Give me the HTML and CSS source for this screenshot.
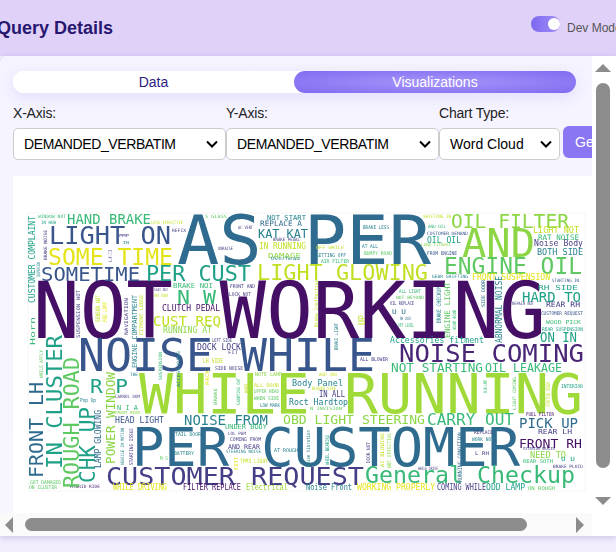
FILE: index.html
```html
<!DOCTYPE html>
<html lang="en">

<head>
    <meta charset="UTF-8">
    <meta name="viewport" content="width=device-width, initial-scale=1.0">
    <title>Query Details</title>
    <link rel="stylesheet" href="styles.css">
</head>

<body>
    <header class="top">
        <h1>Query Details</h1>
        <div class="dev-mode">
            <span class="toggle"><span class="knob"></span></span>
            <span class="dev-label">Dev Mode</span>
        </div>
    </header>

    <main class="card">
        <div class="content">
            <div class="tabs">
                <button class="tab">Data</button>
                <button class="tab active">Visualizations</button>
            </div>

            <div class="controls">
                <div class="field axis">
                    <label for="xAxis">X-Axis:</label>
                    <select id="xAxis"><option>DEMANDED_VERBATIM</option></select>
                </div>
                <div class="field axis">
                    <label for="yAxis">Y-Axis:</label>
                    <select id="yAxis"><option>DEMANDED_VERBATIM</option></select>
                </div>
                <div class="field kind">
                    <label for="chartType">Chart Type:</label>
                    <select id="chartType"><option>Word Cloud</option></select>
                </div>
                <button class="generate">Generate</button>
            </div>

            <div class="panel">
                <!-- word cloud, coordinates are page pixels -->
                <svg class="cloud" width="579" height="337" viewBox="13 176 579 337">
                    <rect class="cloud-bg" x="28" y="213" width="557" height="278"/>

                    <!-- big words -->
                    <text class="v0" x="33" y="338" font-size="78" textLength="513" lengthAdjust="spacingAndGlyphs">NOT WORKING</text>
                    <text class="v3" x="177" y="264" font-size="67" textLength="254" lengthAdjust="spacingAndGlyphs">AS PER</text>
                    <text class="v7" x="139" y="413" font-size="55" textLength="444" lengthAdjust="spacingAndGlyphs">WHILE RUNNING</text>
                    <text class="v3" x="132" y="466" font-size="53" textLength="388" lengthAdjust="spacingAndGlyphs">PER CUSTOMER</text>
                    <text class="v2" x="78" y="371" font-size="45" textLength="297" lengthAdjust="spacingAndGlyphs">NOISE WHILE</text>
                    <text class="v7b" x="462" y="257" font-size="39" textLength="73" lengthAdjust="spacingAndGlyphs">AND</text>
                    <text class="v1" x="106" y="485" font-size="25" textLength="258" lengthAdjust="spacingAndGlyphs">CUSTOMER REQUEST</text>
                    <text class="v0b" x="399" y="362" font-size="25" textLength="185" lengthAdjust="spacingAndGlyphs">NOISE COMING</text>
                    <text class="v2" x="49" y="244" font-size="25" textLength="122" lengthAdjust="spacingAndGlyphs">LIGHT ON</text>
                    <text class="v5" x="365" y="483" font-size="23" textLength="210" lengthAdjust="spacingAndGlyphs">General Checkup</text>
                    <text class="v9" x="48" y="265" font-size="23" textLength="125" lengthAdjust="spacingAndGlyphs">SOME TIME</text>
                    <text class="v6" x="444" y="274" font-size="23" textLength="138" lengthAdjust="spacingAndGlyphs">ENGINE OIL</text>
                    <text class="v8" x="257" y="280" font-size="22" textLength="171" lengthAdjust="spacingAndGlyphs">LIGHT GLOWING</text>
                    <text class="v4" x="146" y="281" font-size="21" textLength="105" lengthAdjust="spacingAndGlyphs">PER CUST</text>
                    <text class="v2" x="41" y="281" font-size="20" textLength="99" lengthAdjust="spacingAndGlyphs">SOMETIME</text>
                    <text class="v7b" x="451" y="228" font-size="19.5" textLength="118" lengthAdjust="spacingAndGlyphs">OIL FILTER</text>
                    <text class="v5" x="177" y="304" font-size="20" textLength="39" lengthAdjust="spacingAndGlyphs">N W</text>
                    <text class="v4" x="90" y="393" font-size="20" textLength="38" lengthAdjust="spacingAndGlyphs">R P</text>

                    <!-- medium words -->
                    <text class="v5" x="67" y="224" font-size="13.6" textLength="84" lengthAdjust="spacingAndGlyphs">HAND BRAKE</text>
                    <text class="v8" x="153" y="326" font-size="13.6" textLength="68" lengthAdjust="spacingAndGlyphs">CUST REQ</text>
                    <text class="v4" x="522" y="302" font-size="13.6" textLength="59" lengthAdjust="spacingAndGlyphs">HARD TO</text>
                    <text class="v4" x="540" y="342" font-size="13.6" textLength="37" lengthAdjust="spacingAndGlyphs">ON IN</text>
                    <text class="v5" x="391" y="372" font-size="12.6" textLength="92" lengthAdjust="spacingAndGlyphs">NOT STARTING</text>
                    <text class="v5" x="485" y="372" font-size="12.6" textLength="77" lengthAdjust="spacingAndGlyphs">OIL LEAKAGE</text>
                    <text class="v5" x="427" y="425" font-size="15.8" textLength="87" lengthAdjust="spacingAndGlyphs">CARRY OUT</text>
                    <text class="v7b" x="283" y="424" font-size="13" textLength="142" lengthAdjust="spacingAndGlyphs">OBD LIGHT STEERING</text>
                    <text class="v3b" x="184" y="425" font-size="13.8" textLength="84" lengthAdjust="spacingAndGlyphs">NOISE FROM</text>
                    <text class="v3" x="519" y="428" font-size="13.6" textLength="59" lengthAdjust="spacingAndGlyphs">PICK UP</text>
                    <text class="v0" x="519" y="448" font-size="13" textLength="63" lengthAdjust="spacingAndGlyphs">FRONT RH</text>
                    <text class="v3b" x="258" y="238" font-size="12" textLength="50" lengthAdjust="spacingAndGlyphs">KAT KAT</text>
                    <text class="v3b" x="537" y="255" font-size="9" textLength="46" lengthAdjust="spacingAndGlyphs">BOTH SIDE</text>
                    <text class="v1" x="534" y="246" font-size="9" textLength="49" lengthAdjust="spacingAndGlyphs">Noise Body</text>
                    <text class="v4" x="427" y="243" font-size="9" textLength="34" lengthAdjust="spacingAndGlyphs">OIL OIL</text>
                    <text class="v8" x="259" y="249" font-size="9" textLength="47" lengthAdjust="spacingAndGlyphs">IN RUNNING</text>
                    <text class="v3b" x="292" y="386" font-size="9" textLength="51" lengthAdjust="spacingAndGlyphs">Body Panel</text>
                    <text class="v3b" x="289" y="405" font-size="9" textLength="59" lengthAdjust="spacingAndGlyphs">Roct Hardtop</text>
                    <text class="v1" x="319" y="397" font-size="8" textLength="26" lengthAdjust="spacingAndGlyphs">IN ALL</text>
                    <text class="v4" x="390" y="343" font-size="8" textLength="94" lengthAdjust="spacingAndGlyphs">Accessories fitment</text>
                    <text class="v9" x="472" y="280" font-size="8" textLength="78" lengthAdjust="spacingAndGlyphs">FRONT SUSPENSION</text>

                    <!-- small words -->
                    <text class="v0" x="162" y="311" font-size="8" textLength="58" lengthAdjust="spacingAndGlyphs">CLUTCH PEDAL</text>
                    <text class="v7b" x="163" y="333" font-size="8" textLength="49" lengthAdjust="spacingAndGlyphs">RUNNING AT</text>
                    <text class="v5" x="173" y="288" font-size="7" textLength="40" lengthAdjust="spacingAndGlyphs">BRAKE NOI</text>
                    <text class="v1" x="197" y="350" font-size="8" textLength="44" lengthAdjust="spacingAndGlyphs">DOCK LOCK</text>
                    <text class="v2" x="115" y="423" font-size="8" textLength="49" lengthAdjust="spacingAndGlyphs">HEAD LIGHT</text>
                    <text class="v9" x="113" y="490" font-size="8" textLength="54" lengthAdjust="spacingAndGlyphs">WHILE DRIVING</text>
                    <text class="v0" x="183" y="490" font-size="8" textLength="58" lengthAdjust="spacingAndGlyphs">FILTER REPLACE</text>
                    <text class="v7" x="246" y="490" font-size="8" textLength="42" lengthAdjust="spacingAndGlyphs">Electrical</text>
                    <text class="v3b" x="306" y="490" font-size="8" textLength="46" lengthAdjust="spacingAndGlyphs">Noise Front</text>
                    <text class="v9" x="357" y="490" font-size="8" textLength="78" lengthAdjust="spacingAndGlyphs">WORKING PROPERLY</text>
                    <text class="v1" x="437" y="490" font-size="8" textLength="49" lengthAdjust="spacingAndGlyphs">COMING WHILE</text>
                    <text class="v4" x="486" y="490" font-size="8" textLength="39" lengthAdjust="spacingAndGlyphs">ODD LAMP</text>
                    <text class="v6" x="528" y="490" font-size="5" textLength="27" lengthAdjust="spacingAndGlyphs">ON ROUGH</text>
                    <text class="v6" x="30" y="484" font-size="5" textLength="31" lengthAdjust="spacingAndGlyphs">GOT DAMAGED</text>
                    <text class="v6" x="29" y="489" font-size="5" textLength="28" lengthAdjust="spacingAndGlyphs">ON CLUSTER</text>
                    <text class="v0b" x="70" y="488" font-size="4.5" textLength="30" lengthAdjust="spacingAndGlyphs">HYBRID RIDE</text>
                    <text class="v3b" x="267" y="220" font-size="7" textLength="39" lengthAdjust="spacingAndGlyphs">NOT START</text>
                    <text class="v3" x="260" y="226" font-size="7.5" textLength="42" lengthAdjust="spacingAndGlyphs">REPLACE A</text>
                    <text class="v7b" x="268" y="258" font-size="7" textLength="33" lengthAdjust="spacingAndGlyphs">DAMAGE</text>
                    <text class="v1" x="273" y="241" font-size="4.5" textLength="27" lengthAdjust="spacingAndGlyphs">BRAKE PEDAL</text>
                    <text class="v3b" x="271" y="260" font-size="4.5" textLength="29" lengthAdjust="spacingAndGlyphs">Overhead</text>
                    <text class="v1" x="238" y="229" font-size="4.5" textLength="15" lengthAdjust="spacingAndGlyphs">AC VENT</text>
                    <text class="v6" x="205" y="218" font-size="4.5" textLength="22" lengthAdjust="spacingAndGlyphs">S GLASS</text>
                    <text class="v1" x="119" y="237" font-size="4" textLength="10" lengthAdjust="spacingAndGlyphs">PMP</text>
                    <text class="v3b" x="123" y="244" font-size="4" textLength="6" lengthAdjust="spacingAndGlyphs">IN</text>
                    <text class="v8" x="533" y="233" font-size="8" textLength="46" lengthAdjust="spacingAndGlyphs">LIGHT NOT</text>
                    <text class="v5" x="538" y="240" font-size="7.5" textLength="41" lengthAdjust="spacingAndGlyphs">RAT NOISE</text>
                    <text class="v4" x="538" y="290" font-size="7" textLength="40" lengthAdjust="spacingAndGlyphs">RH SIDE</text>
                    <text class="v1" x="546" y="307" font-size="7.5" textLength="34" lengthAdjust="spacingAndGlyphs">REAR RH</text>
                    <text class="v2" x="541" y="315" font-size="5" textLength="42" lengthAdjust="spacingAndGlyphs">CUSTOMER REQUEST</text>
                    <text class="v5" x="546" y="324" font-size="5.5" textLength="35" lengthAdjust="spacingAndGlyphs">WOOD PICK</text>
                    <text class="v4" x="542" y="331" font-size="5" textLength="41" lengthAdjust="spacingAndGlyphs">REAR SUSPENSION</text>
                    <text class="v3b" x="432" y="278" font-size="4.5" textLength="36" lengthAdjust="spacingAndGlyphs">GEAR SHIFTING</text>
                    <text class="v1" x="512" y="305" font-size="4.5" textLength="22" lengthAdjust="spacingAndGlyphs">REPAIR NOT</text>
                    <text class="v3b" x="363" y="229" font-size="5" textLength="26" lengthAdjust="spacingAndGlyphs">BRAKE LESS</text>
                    <text class="v2" x="427" y="235" font-size="4.5" textLength="41" lengthAdjust="spacingAndGlyphs">CUSTOMER DEMAND</text>
                    <text class="v7b" x="421" y="246" font-size="4.5" textLength="30" lengthAdjust="spacingAndGlyphs">Lamp fitment</text>
                    <text class="v2" x="427" y="255" font-size="5" textLength="30" lengthAdjust="spacingAndGlyphs">FROM ENGINE</text>
                    <text class="v8" x="423" y="218" font-size="4.5" textLength="28" lengthAdjust="spacingAndGlyphs">SHIFTING IN</text>
                    <text class="v5" x="428" y="228" font-size="4.5" textLength="18" lengthAdjust="spacingAndGlyphs">AND OIL</text>
                    <text class="v3b" x="362" y="248" font-size="5" textLength="16" lengthAdjust="spacingAndGlyphs">AT ALL</text>
                    <text class="v6" x="364" y="255" font-size="5" textLength="28" lengthAdjust="spacingAndGlyphs">BUMPY ROAD</text>
                    <text class="v8" x="316" y="249" font-size="4.5" textLength="28" lengthAdjust="spacingAndGlyphs">OFF WHILE</text>
                    <text class="v3b" x="316" y="257" font-size="5" textLength="30" lengthAdjust="spacingAndGlyphs">GETTING OFF</text>
                    <text class="v5" x="321" y="263" font-size="5" textLength="28" lengthAdjust="spacingAndGlyphs">AIR FILTER</text>
                    <text class="v1" x="172" y="232" font-size="4.5" textLength="14" lengthAdjust="spacingAndGlyphs">REFIX</text>
                    <text class="v8" x="151" y="224" font-size="4.5" textLength="32" lengthAdjust="spacingAndGlyphs">LESS EFFECTIVE</text>
                    <text class="v5" x="38" y="218" font-size="4.5" textLength="28" lengthAdjust="spacingAndGlyphs">WINDOW NOT</text>
                    <text class="v4" x="41" y="224" font-size="4.5" textLength="15" lengthAdjust="spacingAndGlyphs">IN HUB</text>
                    <text class="v1" x="218" y="250" font-size="4.5" textLength="15" lengthAdjust="spacingAndGlyphs">UNRAISE</text>
                    <text class="v1" x="230" y="288" font-size="5" textLength="25" lengthAdjust="spacingAndGlyphs">FRONT AND</text>
                    <text class="v1" x="229" y="296" font-size="5" textLength="22" lengthAdjust="spacingAndGlyphs">LOCK NOT</text>
                    <text class="v8" x="154" y="297" font-size="4.5" textLength="14" lengthAdjust="spacingAndGlyphs">RHS DOOR</text>
                    <text class="v1" x="154" y="291" font-size="4.5" textLength="14" lengthAdjust="spacingAndGlyphs">Seat Not</text>
                    <text class="v1" x="212" y="342" font-size="5" textLength="20" lengthAdjust="spacingAndGlyphs">LEFT SIDE</text>
                    <text class="v1" x="228" y="354" font-size="4.5" textLength="10" lengthAdjust="spacingAndGlyphs">FIT</text>
                    <text class="v8" x="203" y="363" font-size="7" textLength="20" lengthAdjust="spacingAndGlyphs">LH SIDE</text>
                    <text class="v1" x="215" y="370" font-size="5" textLength="28" lengthAdjust="spacingAndGlyphs">SIDE NOISE</text>
                    <text class="v7b" x="255" y="376" font-size="5" textLength="27" lengthAdjust="spacingAndGlyphs">NOTE LAMP</text>
                    <text class="v8" x="254" y="387" font-size="5" textLength="25" lengthAdjust="spacingAndGlyphs">ALL DOOR</text>
                    <text class="v6" x="254" y="393" font-size="5" textLength="25" lengthAdjust="spacingAndGlyphs">UPPER HEAD</text>
                    <text class="v6" x="254" y="400" font-size="5" textLength="25" lengthAdjust="spacingAndGlyphs">WHEN SIDE</text>
                    <text class="v3b" x="260" y="407" font-size="5" textLength="20" lengthAdjust="spacingAndGlyphs">LOW MARK</text>
                    <text class="v3b" x="80" y="402" font-size="5.5" textLength="16" lengthAdjust="spacingAndGlyphs">Pop Up</text>
                    <text class="v3b" x="130" y="376" font-size="4.5" textLength="8" lengthAdjust="spacingAndGlyphs">THE</text>
                    <text class="v1" x="115" y="398" font-size="4.5" textLength="25" lengthAdjust="spacingAndGlyphs">CARROL DOM</text>
                    <text class="v5" x="117" y="410" font-size="7" textLength="21" lengthAdjust="spacingAndGlyphs">N I A</text>
                    <text class="v7b" x="115" y="414" font-size="4" textLength="25" lengthAdjust="spacingAndGlyphs">FRONT REAR</text>
                    <text class="v5" x="225" y="429" font-size="7" textLength="42" lengthAdjust="spacingAndGlyphs">UNDER BODY</text>
                    <text class="v3b" x="175" y="436" font-size="5" textLength="26" lengthAdjust="spacingAndGlyphs">TAIL DOOR</text>
                    <text class="v1" x="228" y="435" font-size="4.5" textLength="18" lengthAdjust="spacingAndGlyphs">LOL PAM</text>
                    <text class="v1" x="230" y="441" font-size="5" textLength="31" lengthAdjust="spacingAndGlyphs">COMING FROM</text>
                    <text class="v1" x="228" y="449" font-size="6.5" textLength="32" lengthAdjust="spacingAndGlyphs">AND REAR</text>
                    <text class="v3b" x="226" y="453" font-size="4.5" textLength="35" lengthAdjust="spacingAndGlyphs">STEERING NOISE</text>
                    <text class="v3b" x="174" y="455" font-size="5" textLength="20" lengthAdjust="spacingAndGlyphs">BATTERY</text>
                    <text class="v6" x="160" y="460" font-size="5" textLength="8" lengthAdjust="spacingAndGlyphs">M S</text>
                    <text class="v8" x="240" y="463" font-size="6" textLength="28" lengthAdjust="spacingAndGlyphs">TPMS LIGHT</text>
                    <text class="v3b" x="274" y="452" font-size="5" textLength="24" lengthAdjust="spacingAndGlyphs">AT ROUGH</text>
                    <text class="v1" x="538" y="434" font-size="7" textLength="34" lengthAdjust="spacingAndGlyphs">REAR LH</text>
                    <text class="v0" x="526" y="416" font-size="5" textLength="28" lengthAdjust="spacingAndGlyphs">FUEL FILTER</text>
                    <text class="v7b" x="530" y="458" font-size="8" textLength="36" lengthAdjust="spacingAndGlyphs">NEED TO</text>
                    <text class="v1" x="523" y="450" font-size="4" textLength="32" lengthAdjust="spacingAndGlyphs">EXTERIOR BRACES</text>
                    <text class="v5" x="523" y="463" font-size="5" textLength="30" lengthAdjust="spacingAndGlyphs">REAR SOTH</text>
                    <text class="v4" x="561" y="461" font-size="6" textLength="14" lengthAdjust="spacingAndGlyphs">U U</text>
                    <text class="v1" x="553" y="468" font-size="4.5" textLength="30" lengthAdjust="spacingAndGlyphs">BRAKE PLUID</text>
                    <text class="v1" x="474" y="434" font-size="5" textLength="19" lengthAdjust="spacingAndGlyphs">REPLACE</text>
                    <text class="v3b" x="472" y="441" font-size="5" textLength="22" lengthAdjust="spacingAndGlyphs">WORK NOT</text>
                    <text class="v1" x="475" y="455" font-size="5" textLength="14" lengthAdjust="spacingAndGlyphs">L RH</text>
                    <text class="v1" x="418" y="470" font-size="4.5" textLength="20" lengthAdjust="spacingAndGlyphs">WHILE DRIVE</text>
                    <text class="v1" x="360" y="361" font-size="5" textLength="28" lengthAdjust="spacingAndGlyphs">ALL BLOWER</text>
                    <text class="v8" x="319" y="376" font-size="4.5" textLength="18" lengthAdjust="spacingAndGlyphs">ADD JOD</text>
                    <text class="v8" x="312" y="390" font-size="4.5" textLength="24" lengthAdjust="spacingAndGlyphs">BLOWER SPEE</text>
                    <text class="v4" x="561" y="388" font-size="5" textLength="22" lengthAdjust="spacingAndGlyphs">INTERIOR</text>
                    <text class="v6" x="310" y="410" font-size="4.5" textLength="32" lengthAdjust="spacingAndGlyphs">N INVISION</text>
                    <text class="v5" x="399" y="293" font-size="5" textLength="22" lengthAdjust="spacingAndGlyphs">ALL LIGHT</text>
                    <text class="v6" x="396" y="299" font-size="4.5" textLength="28" lengthAdjust="spacingAndGlyphs">NOT BEYOND</text>
                    <text class="v1" x="390" y="305" font-size="5" textLength="24" lengthAdjust="spacingAndGlyphs">OIL REPLACE</text>
                    <text class="v3" x="392" y="314" font-size="6.5" textLength="14" lengthAdjust="spacingAndGlyphs">U U</text>
                    <text class="v3" x="400" y="320" font-size="4.5" textLength="11" lengthAdjust="spacingAndGlyphs">RH LOCK</text>
                    <text class="v5" x="398" y="327" font-size="5" textLength="16" lengthAdjust="spacingAndGlyphs">OFF LEVEL</text>
                    <text class="v2" x="552" y="282" font-size="4.5" textLength="27" lengthAdjust="spacingAndGlyphs">STARTING IN</text>

                    <!-- vertical words, baseline runs up the page -->
                    <text class="v3" transform="translate(43 478) rotate(-90)" font-size="19.7" textLength="96" lengthAdjust="spacingAndGlyphs">FRONT LH</text>
                    <text class="v4" transform="translate(62 469) rotate(-90)" font-size="22" textLength="134" lengthAdjust="spacingAndGlyphs">IN CLUSTER</text>
                    <text class="v6" transform="translate(79 488) rotate(-90)" font-size="21.6" textLength="131" lengthAdjust="spacingAndGlyphs">ROUGH ROAD</text>
                    <text class="v4" transform="translate(95 483) rotate(-90)" font-size="20.8" textLength="76" lengthAdjust="spacingAndGlyphs">CHK UP</text>
                    <text class="v7b" transform="translate(115 464) rotate(-90)" font-size="12.6" textLength="92" lengthAdjust="spacingAndGlyphs">POWER WINDOW</text>
                    <text class="v3" transform="translate(101 468) rotate(-90)" font-size="8" textLength="58" lengthAdjust="spacingAndGlyphs">LAMP GLOWING</text>
                    <text class="v4" transform="translate(35 303) rotate(-90)" font-size="8" textLength="87" lengthAdjust="spacingAndGlyphs">CUSTOMER COMPLAINT</text>
                    <text class="v3b" transform="translate(502 343) rotate(-90)" font-size="8" textLength="67" lengthAdjust="spacingAndGlyphs">ABNORMAL NOISE</text>
                    <text class="v6" transform="translate(450 338) rotate(-90)" font-size="7.5" textLength="56" lengthAdjust="spacingAndGlyphs">ENGINE LIGHT</text>
                    <text class="v3b" transform="translate(441 323) rotate(-90)" font-size="6" textLength="36" lengthAdjust="spacingAndGlyphs">BRAKE CHECKUP</text>
                    <text class="v8" transform="translate(365 325) rotate(-90)" font-size="8" textLength="10" lengthAdjust="spacingAndGlyphs">UP</text>
                    <text class="v8" transform="translate(318 327) rotate(-90)" font-size="5" textLength="47" lengthAdjust="spacingAndGlyphs">Brake Ineffective</text>
                    <text class="v3b" transform="translate(137 368) rotate(-90)" font-size="7" textLength="73" lengthAdjust="spacingAndGlyphs">ENGINE COMPARTMENT</text>
                    <text class="v1" transform="translate(80 338) rotate(-90)" font-size="5" textLength="48" lengthAdjust="spacingAndGlyphs">SUSPENSION NOT</text>
                    <text class="v8" transform="translate(100 322) rotate(-90)" font-size="6" textLength="27" lengthAdjust="spacingAndGlyphs">SENSOR NOT</text>
                    <text class="v9" transform="translate(107 322) rotate(-90)" font-size="6" textLength="20" lengthAdjust="spacingAndGlyphs">FOG LAMP</text>
                    <text class="v1" transform="translate(128 335) rotate(-90)" font-size="5" textLength="37" lengthAdjust="spacingAndGlyphs">NAVIGATION</text>
                    <text class="v8" transform="translate(143 335) rotate(-90)" font-size="5" textLength="40" lengthAdjust="spacingAndGlyphs">FITMENT LOOSE</text>
                    <text class="v5" transform="translate(35 345) rotate(-90)" font-size="7" textLength="28" lengthAdjust="spacingAndGlyphs">Horn</text>
                    <text class="v1" transform="translate(47 260) rotate(-90)" font-size="4.5" textLength="30" lengthAdjust="spacingAndGlyphs">BRAKE NOISE</text>
                    <text class="v3b" transform="translate(40 277) rotate(-90)" font-size="4.5" textLength="15" lengthAdjust="spacingAndGlyphs">SUSPENSION</text>
                    <text class="v1" transform="translate(112 262) rotate(-90)" font-size="5" textLength="12" lengthAdjust="spacingAndGlyphs">ALL AMPLIFIER</text>
                    <text class="v5" transform="translate(162 380) rotate(-90)" font-size="4.5" textLength="28" lengthAdjust="spacingAndGlyphs">SUSPENSION</text>
                    <text class="v3b" transform="translate(180 387) rotate(-90)" font-size="4.5" textLength="36" lengthAdjust="spacingAndGlyphs">ACCESSORIES</text>
                    <text class="v9" transform="translate(209 385) rotate(-90)" font-size="5" textLength="15" lengthAdjust="spacingAndGlyphs">PACK</text>
                    <text class="v6" transform="translate(217 405) rotate(-90)" font-size="4.5" textLength="17" lengthAdjust="spacingAndGlyphs">BRAKE</text>
                    <text class="v5" transform="translate(240 405) rotate(-90)" font-size="4.5" textLength="27" lengthAdjust="spacingAndGlyphs">CARRYING OUT</text>
                    <text class="v8" transform="translate(248 393) rotate(-90)" font-size="5" textLength="10" lengthAdjust="spacingAndGlyphs">WHEEL</text>
                    <text class="v3b" transform="translate(124 465) rotate(-90)" font-size="4.5" textLength="37" lengthAdjust="spacingAndGlyphs">VEHICLE IN MOTION</text>
                    <text class="v1" transform="translate(133 465) rotate(-90)" font-size="5" textLength="37" lengthAdjust="spacingAndGlyphs">STARTING ISSUE</text>
                    <text class="v9" transform="translate(238 470) rotate(-90)" font-size="5" textLength="13" lengthAdjust="spacingAndGlyphs">FITT</text>
                    <text class="v6" transform="translate(43 378) rotate(-90)" font-size="5" textLength="28" lengthAdjust="spacingAndGlyphs">WHILE APPLY</text>
                    <text class="v3b" transform="translate(310 467) rotate(-90)" font-size="5" textLength="37" lengthAdjust="spacingAndGlyphs">Noise Vibration</text>
                    <text class="v4" transform="translate(329 465) rotate(-90)" font-size="5" textLength="30" lengthAdjust="spacingAndGlyphs">WHEEL BEARING</text>
                    <text class="v1" transform="translate(370 463) rotate(-90)" font-size="5" textLength="21" lengthAdjust="spacingAndGlyphs">DOOR NOT</text>
                    <text class="v8" transform="translate(384 467) rotate(-90)" font-size="5" textLength="34" lengthAdjust="spacingAndGlyphs">AC BLOWING</text>
                    <text class="v7b" transform="translate(391 468) rotate(-90)" font-size="5" textLength="35" lengthAdjust="spacingAndGlyphs">NOT EFFECTIVE</text>
                    <text class="v3" transform="translate(462 482) rotate(-90)" font-size="6" textLength="50" lengthAdjust="spacingAndGlyphs">RUNNING CONDITION</text>
                    <text class="v8" transform="translate(550 407) rotate(-90)" font-size="6" textLength="25" lengthAdjust="spacingAndGlyphs">STARTING ROUGH</text>
                    <text class="v5" transform="translate(487 393) rotate(-90)" font-size="5" textLength="13" lengthAdjust="spacingAndGlyphs">BLUB LAMP</text>
                    <text class="v6" transform="translate(516 410) rotate(-90)" font-size="4.5" textLength="33" lengthAdjust="spacingAndGlyphs">LIGHT COMING</text>
                    <text class="v3" transform="translate(485 307) rotate(-90)" font-size="5" textLength="27" lengthAdjust="spacingAndGlyphs">SIDE DOOR</text>
                    <text class="v3b" transform="translate(338 350) rotate(-90)" font-size="5" textLength="27" lengthAdjust="spacingAndGlyphs">BRAKE LIGHT</text>
                    <text class="v5" transform="translate(456 330) rotate(-90)" font-size="4.5" textLength="20" lengthAdjust="spacingAndGlyphs">HOUR HOUR</text>
                </svg>
            </div>
        </div>

        <div class="vbar">
            <span class="arrow up"></span>
            <span class="vthumb"></span>
            <span class="arrow down"></span>
        </div>

        <div class="hbar">
            <span class="arrow left"></span>
            <span class="hthumb"></span>
            <span class="arrow right"></span>
        </div>
        <div class="corner"></div>
    </main>
</body>

</html>
```

FILE: styles.css
```css
html,
body {
    margin: 0;
    height: 552px;
    overflow: hidden;
}

body {
    width: 616px;
    font-family: "Liberation Sans", Arial, sans-serif;
    background-color: #f3eefd;
}

.top {
    display: flex;
    justify-content: space-between;
    height: 56px;
    background-color: #e0d1f9;
}

.top h1 {
    margin: 18px 0 0 -3px;
    font-size: 18px;
    line-height: 21px;
    color: #27176f;
}

.dev-mode {
    display: flex;
    width: 85px;
    padding-top: 16px;
    white-space: nowrap;
}

.toggle {
    display: block;
    width: 30px;
    height: 16px;
    border-radius: 8px;
    background: linear-gradient(90deg, #7c68ee, #a48ffa);
}

.knob {
    display: block;
    width: 12px;
    height: 12px;
    margin: 2px 0 0 17px;
    border-radius: 50%;
    background-color: white;
}

.dev-label {
    margin: 5px 0 0 7px;
    font-size: 12px;
    line-height: 14px;
    color: #555;
}

.card {
    display: grid;
    grid-template-columns: 592px 24px;
    grid-template-rows: 457px 23px;
    height: 480px;
    border-radius: 8px 0 0 0;
    background-color: white;
    box-shadow: 0 2px 6px rgba(90, 80, 170, 0.25);
    overflow: hidden;
}

.content {
    padding: 15px 0 0 13px;
    overflow: hidden;
    background: linear-gradient(#f5f3ff, #f7f6ff);
}

.tabs {
    display: flex;
    width: 563px;
    height: 22px;
    border-radius: 11px;
    background-color: white;
    box-shadow: 0 4px 14px rgba(124, 104, 238, 0.15);
}

.tab {
    width: 281px;
    padding: 0;
    border: none;
    border-radius: 11px;
    font-family: inherit;
    font-size: 14px;
    color: #2f2185;
    background-color: white;
}

.tab.active {
    width: 282px;
    color: white;
    background: radial-gradient(ellipse at center, #a795fb, #7f6bf0);
}

.controls {
    display: flex;
    align-items: flex-end;
    width: 640px;
    margin-top: 12px;
}

.field {
    display: flex;
    flex-direction: column;
}

.field label {
    margin-bottom: 6px;
    font-size: 14px;
    line-height: 17px;
    letter-spacing: -0.2px;
    color: #222;
}

.axis {
    width: 213px;
}

.axis select {
    letter-spacing: -0.4px;
}

.kind {
    width: 121px;
}

select {
    height: 32px;
    padding: 0 24px 0 10px;
    border: 1px solid #ccc;
    border-radius: 5px;
    appearance: none;
    font-family: inherit;
    font-size: 14px;
    color: black;
    background: white url("data:image/svg+xml,%3Csvg xmlns='http://www.w3.org/2000/svg' width='12' height='8'%3E%3Cpath d='M1 1.5l5 5 5-5' fill='none' stroke='black' stroke-width='2'/%3E%3C/svg%3E") no-repeat right 7px center;
}

.generate {
    width: 90px;
    height: 32px;
    margin: 0 0 2px 3px;
    padding: 0 0 0 12px;
    border: none;
    border-radius: 6px;
    text-align: left;
    font-family: inherit;
    font-size: 14px;
    color: white;
    background-color: #8a76f3;
}

.panel {
    width: 640px;
    height: 337px;
    margin-top: 16px;
    background-color: white;
}

.cloud {
    display: block;
    font-family: "DejaVu Sans Mono", "Liberation Mono", monospace;
    filter: blur(0.35px);
}

.cloud-bg {
    fill: white;
    stroke: #f6f6f6;
}

/* viridis colours of the cloud */
.v0 { fill: #450f66; }
.v0b { fill: #482576; }
.v1 { fill: #433e85; }
.v2 { fill: #38558c; }
.v3 { fill: #2e6b8e; }
.v3b { fill: #26828e; }
.v4 { fill: #1fa187; }
.v5 { fill: #38b977; }
.v6 { fill: #5ec962; }
.v7 { fill: #a0da39; }
.v7b { fill: #8cd646; }
.v8 { fill: #c2df23; }
.v9 { fill: #e5e419; }

.vbar {
    display: flex;
    flex-direction: column;
    align-items: center;
    padding: 8px 6px 0 4px;
    background-color: white;
}

.vthumb {
    width: 14px;
    height: 385px;
    margin: 11px 0 29px;
    border-radius: 7px;
    background-color: #8c8c8c;
}

.hbar {
    display: flex;
    align-items: center;
    padding-left: 5px;
    background-color: #fafafa;
}

.hthumb {
    width: 502px;
    height: 13px;
    margin: 0 49px 0 12px;
    border-radius: 7px;
    background-color: #8c8c8c;
}

.corner {
    background-color: white;
}

.arrow {
    display: block;
    width: 0;
    height: 0;
    border-style: solid;
    border-color: transparent;
}

.arrow.up {
    border-width: 0 8px 8px;
    border-bottom-color: #8c8c8c;
}

.arrow.down {
    border-width: 8px 8px 0;
    border-top-color: #8c8c8c;
}

.arrow.left {
    border-width: 8px 8px 8px 0;
    border-right-color: #8c8c8c;
}

.arrow.right {
    border-width: 8px 0 8px 8px;
    border-left-color: #8c8c8c;
}
```
